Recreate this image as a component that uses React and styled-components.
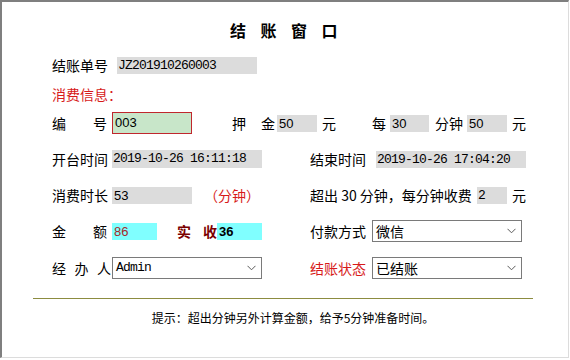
import React from 'react';
import styled, { createGlobalStyle } from 'styled-components';

const cjk = `"Noto Sans CJK SC", "Microsoft YaHei", sans-serif`;
const mono = `"Liberation Mono", "Noto Sans CJK SC", monospace`;
const sans = `"Liberation Sans", Arial, sans-serif`;

const GlobalStyle = createGlobalStyle`
    html, body {
        margin: 0;
        padding: 0;
        background: #ffffff;
    }
`;

const Window = styled.div`
    box-sizing: border-box;
    width: 569px;
    height: 358px;
    border-top: 2px solid #7f7f7f;
    border-left: 2px solid #7f7f7f;
    border-right: 1px solid #dcdcdc;
    border-bottom: 1px solid #dcdcdc;
    padding-top: 18px;
    font-family: ${cjk};
    font-size: 14px;
    color: #000;
`;

const Title = styled.h1`
    margin: 0;
    height: 20px;
    line-height: 20px;
    text-align: center;
    font-size: 16px;
    font-weight: bold;
    letter-spacing: 14.5px;
    padding-left: 12px;
`;

const Form = styled.div`
    margin-top: 14px;
    padding-left: 50px;
`;

const Row = styled.div`
    display: flex;
    align-items: center;
    height: 22px;
    margin-bottom: ${p => (p.$mb === undefined ? 14 : p.$mb)}px;
`;

const Col = styled.div`
    display: flex;
    align-items: center;
    flex: none;
    width: ${p => (p.$w ? p.$w + 'px' : 'auto')};
`;

const Label = styled.span`
    display: flex;
    flex: none;
    width: ${p => (p.$w ? p.$w + 'px' : 'auto')};
    margin-left: ${p => p.$ml || 0}px;
    line-height: 20px;
    white-space: nowrap;
    color: ${p => p.$color || '#000'};
    font-weight: ${p => (p.$bold ? 'bold' : 'normal')};
`;

const SpreadBox = styled.span`
    display: flex;
    justify-content: space-between;
    width: ${p => p.$w}px;
`;

const Spread = ({ text, w }) => (
    <SpreadBox $w={w}>
        {text.split('').map((c, i) => <span key={i}>{c}</span>)}
    </SpreadBox>
);

const Field = styled.span`
    flex: none;
    box-sizing: border-box;
    width: ${p => p.$w}px;
    height: ${p => p.$h || 17}px;
    line-height: ${p => (p.$h || 17) - (p.$border ? 2 : 0)}px;
    margin-left: ${p => p.$ml || 0}px;
    padding-left: ${p => (p.$mono ? 1 : 2)}px;
    background: ${p => p.$bg || '#dcdcdc'};
    border: ${p => (p.$border ? '1px solid ' + p.$border : 'none')};
    font-family: ${p => (p.$mono ? mono : sans)};
    font-size: 13px;
    letter-spacing: ${p => (p.$mono ? '-0.8px' : '0')};
    font-weight: ${p => (p.$bold ? 'bold' : 'normal')};
    color: ${p => p.$color || '#000'};
    white-space: nowrap;
    overflow: hidden;
`;

const Unit = styled.span`
    flex: none;
    margin-left: ${p => p.$ml || 0}px;
    line-height: 20px;
    white-space: nowrap;
    color: ${p => p.$color || '#000'};
`;

const SelectBox = styled.div`
    box-sizing: border-box;
    display: flex;
    align-items: center;
    justify-content: space-between;
    flex: none;
    width: 150px;
    height: 22px;
    padding: 0 5px 0 3px;
    border: 1px solid #7a7a7a;
    background: #fff;
    font-family: ${p => (p.$mono ? mono : cjk)};
    font-size: ${p => (p.$mono ? 13 : 14)}px;
    letter-spacing: ${p => (p.$mono ? '-0.8px' : '0')};
    line-height: 20px;
`;

const Chevron = () => (
    <svg width="9" height="6" viewBox="0 0 9 6">
        <polyline points="0.5,0.8 4.5,4.8 8.5,0.8" fill="none" stroke="#5a5a5a" strokeWidth="1" />
    </svg>
);

const Select = ({ value, mono }) => (
    <SelectBox $mono={mono}>
        <span>{value}</span>
        <Chevron />
    </SelectBox>
);

const Divider = styled.div`
    margin: 19px 0 0 31px;
    width: 500px;
    border-top: 1px solid #8c8c40;
`;

const Hint = styled.div`
    margin-top: 11px;
    padding-left: 16px;
    text-align: center;
    font-size: 12px;
    line-height: 16px;
`;

const RED = '#d71a1a';

export default function App() {
    return (
        <>
            <GlobalStyle />
            <Window>
                <Title>结账窗口</Title>
                <Form>
                    <Row $mb={7}>
                        <Label $w={65}>结账单号</Label>
                        <Field $w={140} $mono>JZ201910260003</Field>
                    </Row>
                    <Row $mb={7}>
                        <Label $color={RED}>消费信息：</Label>
                    </Row>
                    <Row>
                        <Label $w={60}><Spread text="编号" w={55} /></Label>
                        <Field $w={80} $h={22} $bg="#c8e6c9" $border="#c0272d">003</Field>
                        <Label $ml={40}><Spread text="押金" w={43} /></Label>
                        <Field $w={40} $ml={2}>50</Field>
                        <Unit $ml={5}>元</Unit>
                        <Unit $ml={36}>每</Unit>
                        <Field $w={39} $ml={4}>30</Field>
                        <Unit $ml={6}>分钟</Unit>
                        <Field $w={40} $ml={4}>50</Field>
                        <Unit $ml={5}>元</Unit>
                    </Row>
                    <Row>
                        <Col $w={258}>
                            <Label $w={60}>开台时间</Label>
                            <Field $w={150} $h={18} $mono>2019-10-26 16:11:18</Field>
                        </Col>
                        <Col>
                            <Label $w={66}>结束时间</Label>
                            <Field $w={150} $mono>2019-10-26 17:04:20</Field>
                        </Col>
                    </Row>
                    <Row>
                        <Col $w={258}>
                            <Label $w={60}>消费时长</Label>
                            <Field $w={80}>53</Field>
                            <Unit $ml={12} $color={RED}>（分钟）</Unit>
                        </Col>
                        <Col>
                            <Label $w={167}>超出 30 分钟，每分钟收费</Label>
                            <Field $w={30} $mono>2</Field>
                            <Unit $ml={5}>元</Unit>
                        </Col>
                    </Row>
                    <Row $mb={15}>
                        <Col $w={258}>
                            <Label $w={60}><Spread text="金额" w={55} /></Label>
                            <Field $w={45} $bg="#80ffff" $color="#a52a2a">86</Field>
                            <Label $ml={20} $bold $color="#7a0000"><Spread text="实收" w={40} /></Label>
                            <Field $w={45} $bg="#80ffff" $bold>36</Field>
                        </Col>
                        <Col>
                            <Label $w={62}>付款方式</Label>
                            <Select value="微信" />
                        </Col>
                    </Row>
                    <Row $mb={0}>
                        <Col $w={258}>
                            <Label $w={60}><Spread text="经办人" w={59} /></Label>
                            <Select value="Admin" mono />
                        </Col>
                        <Col>
                            <Label $w={62} $color={RED}>结账状态</Label>
                            <Select value="已结账" />
                        </Col>
                    </Row>
                </Form>
                <Divider />
                <Hint>提示：超出分钟另外计算金额，给予5分钟准备时间。</Hint>
            </Window>
        </>
    );
}
